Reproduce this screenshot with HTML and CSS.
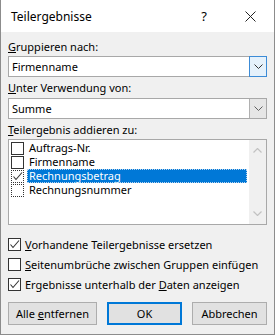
FILE: index.html
```html
<!DOCTYPE html>
<html lang="de">
<head>
    <meta charset="UTF-8">
    <title>Teilergebnisse</title>
    <link rel="stylesheet" href="styles.css">
</head>
<body>
    <div class="dialog">
        <div class="titlebar">
            <span class="title">Teilergebnisse</span>
            <span class="help">?</span>
            <span class="close">
                <svg width="11" height="11" viewBox="0 0 11 11"><path d="M0.5 0.5 L10.5 10.5 M10.5 0.5 L0.5 10.5" stroke="#222" stroke-width="1"/></svg>
            </span>
        </div>

        <div class="content">
            <div class="label"><u>G</u>ruppieren nach:</div>
            <div class="combo">
                <span class="combo-text">Firmenname</span>
                <span class="combo-btn active">
                    <svg width="9" height="5" viewBox="0 0 9 5"><path d="M0.5 0.5 L4.5 4.5 L8.5 0.5" fill="none" stroke="#333" stroke-width="1"/></svg>
                </span>
            </div>

            <div class="label second"><u>U</u>nter Verwendung von:</div>
            <div class="combo">
                <span class="combo-text">Summe</span>
                <span class="combo-btn">
                    <svg width="9" height="5" viewBox="0 0 9 5"><path d="M0.5 0.5 L4.5 4.5 L8.5 0.5" fill="none" stroke="#606060" stroke-width="1"/></svg>
                </span>
            </div>

            <div class="label"><u>T</u>eilergebnis addieren zu:</div>
            <div class="listbox">
                <div class="items">
                    <div class="item"><span class="box"></span><span class="item-text">Auftrags-Nr.</span></div>
                    <div class="item"><span class="box"></span><span class="item-text">Firmenname</span></div>
                    <div class="item"><span class="box dotted"><svg width="11" height="11" viewBox="0 0 11 11"><path d="M1.5 5.5 L4 8.5 L10 1.5" fill="none" stroke="#333" stroke-width="1.1"/></svg></span><span class="item-text selected">Rechnungsbetrag</span></div>
                    <div class="item"><span class="box dotted"></span><span class="item-text">Rechnungsnummer</span></div>
                </div>
                <div class="scrollbar">
                    <svg width="9" height="5" viewBox="0 0 9 5"><path d="M0.5 4.5 L4.5 0.5 L8.5 4.5" fill="none" stroke="#c2c2c2" stroke-width="1.2"/></svg>
                    <svg width="9" height="5" viewBox="0 0 9 5"><path d="M0.5 0.5 L4.5 4.5 L8.5 0.5" fill="none" stroke="#c2c2c2" stroke-width="1.2"/></svg>
                </div>
            </div>

            <div class="options">
                <label class="option"><span class="box"><svg width="11" height="11" viewBox="0 0 11 11"><path d="M1.5 5.5 L4 8.5 L10 1.5" fill="none" stroke="#333" stroke-width="1.1"/></svg></span><span><u>V</u>orhandene Teilergebnisse ersetzen</span></label>
                <label class="option"><span class="box"></span><span><u>S</u>eitenumbrüche zwischen Gruppen einfügen</span></label>
                <label class="option"><span class="box"><svg width="11" height="11" viewBox="0 0 11 11"><path d="M1.5 5.5 L4 8.5 L10 1.5" fill="none" stroke="#333" stroke-width="1.1"/></svg></span><span>Ergebnisse unterhalb der <u>D</u>aten anzeigen</span></label>
            </div>

            <div class="buttons">
                <button class="btn wide">Alle <u>e</u>ntfernen</button>
                <button class="btn default">OK</button>
                <button class="btn">Abbrechen</button>
            </div>
        </div>
    </div>
</body>
</html>
```

FILE: styles.css
```css
* {
    margin: 0;
    padding: 0;
    box-sizing: border-box;
}

body {
    background-color: #f0f0f0;
    font-family: 'Noto Sans', 'Open Sans', sans-serif;
    font-size: 11px;
    color: #000;
}

.dialog {
    width: 275px;
    height: 335px;
    background-color: #f0f0f0;
    border: 1px solid #8c8c8c;
    border-top: none;
}

.titlebar {
    height: 32px;
    background-color: #fff;
    display: flex;
    align-items: center;
    padding-left: 10px;
}

.title {
    flex: 1;
    font-size: 12px;
}

.help {
    width: 44px;
    text-align: center;
    font-size: 13px;
    margin-right: 2px;
}

.close {
    width: 44px;
    display: flex;
    justify-content: center;
    margin-right: 2px;
}

.content {
    padding: 7px 7px 0 7px;
}

.label {
    height: 16px;
    line-height: 16px;
    margin-bottom: 1px;
}

.label.second {
    margin-bottom: 2px;
}

.combo {
    height: 21px;
    background-color: #fff;
    border: 1px solid #a8a8a8;
    display: flex;
    align-items: stretch;
    margin-bottom: 3px;
}

.combo-text {
    flex: 1;
    line-height: 19px;
    padding-left: 3px;
}

.combo-btn {
    width: 17px;
    display: flex;
    align-items: center;
    justify-content: center;
    background-color: #e6e6e6;
    border-left: 1px solid #b0b0b0;
}

.combo-btn.active {
    background-color: #e5f1fb;
    border: 1px solid #3c8bd6;
    margin: -1px -1px -1px 0;
    width: 18px;
}

.listbox {
    height: 86px;
    background-color: #fff;
    border: 1px solid #a8a8a8;
    display: flex;
    margin-bottom: 13px;
}

.items {
    flex: 1;
    padding: 1px 2px 0 1px;
}

.item {
    height: 14px;
    display: flex;
    align-items: center;
}

.item .box {
    margin: 0 3px 0 1px;
}

.item-text {
    line-height: 14px;
    padding: 0 2px;
}

.item-text.selected {
    flex: 1;
    background-color: #0078d7;
    color: #fff;
    outline: 1px dotted #b8d4ef;
    outline-offset: -1px;
}

.box {
    width: 13px;
    height: 13px;
    border: 1px solid #333;
    background-color: #fff;
    display: inline-flex;
    align-items: center;
    justify-content: center;
    flex-shrink: 0;
}

.box.dotted {
    border-style: dotted;
}

.scrollbar {
    width: 17px;
    background-color: #f0f0f0;
    display: flex;
    flex-direction: column;
    justify-content: space-between;
    align-items: center;
    padding: 8px 0 8px;
}

.options {
    display: flex;
    flex-direction: column;
}

.option {
    height: 20px;
    display: flex;
    align-items: flex-start;
    line-height: 13px;
    white-space: nowrap;
}

.option .box {
    margin-right: 4px;
}

.buttons {
    display: flex;
    justify-content: space-between;
    margin-top: 4px;
}

.btn {
    width: 75px;
    height: 23px;
    font-family: 'Noto Sans', 'Open Sans', sans-serif;
    font-size: 11px;
    color: #000;
    background-color: #e1e1e1;
    border: 1px solid #adadad;
}

.btn.wide {
    width: 89px;
}

.btn.default {
    border: 2px solid #0078d7;
}
```
